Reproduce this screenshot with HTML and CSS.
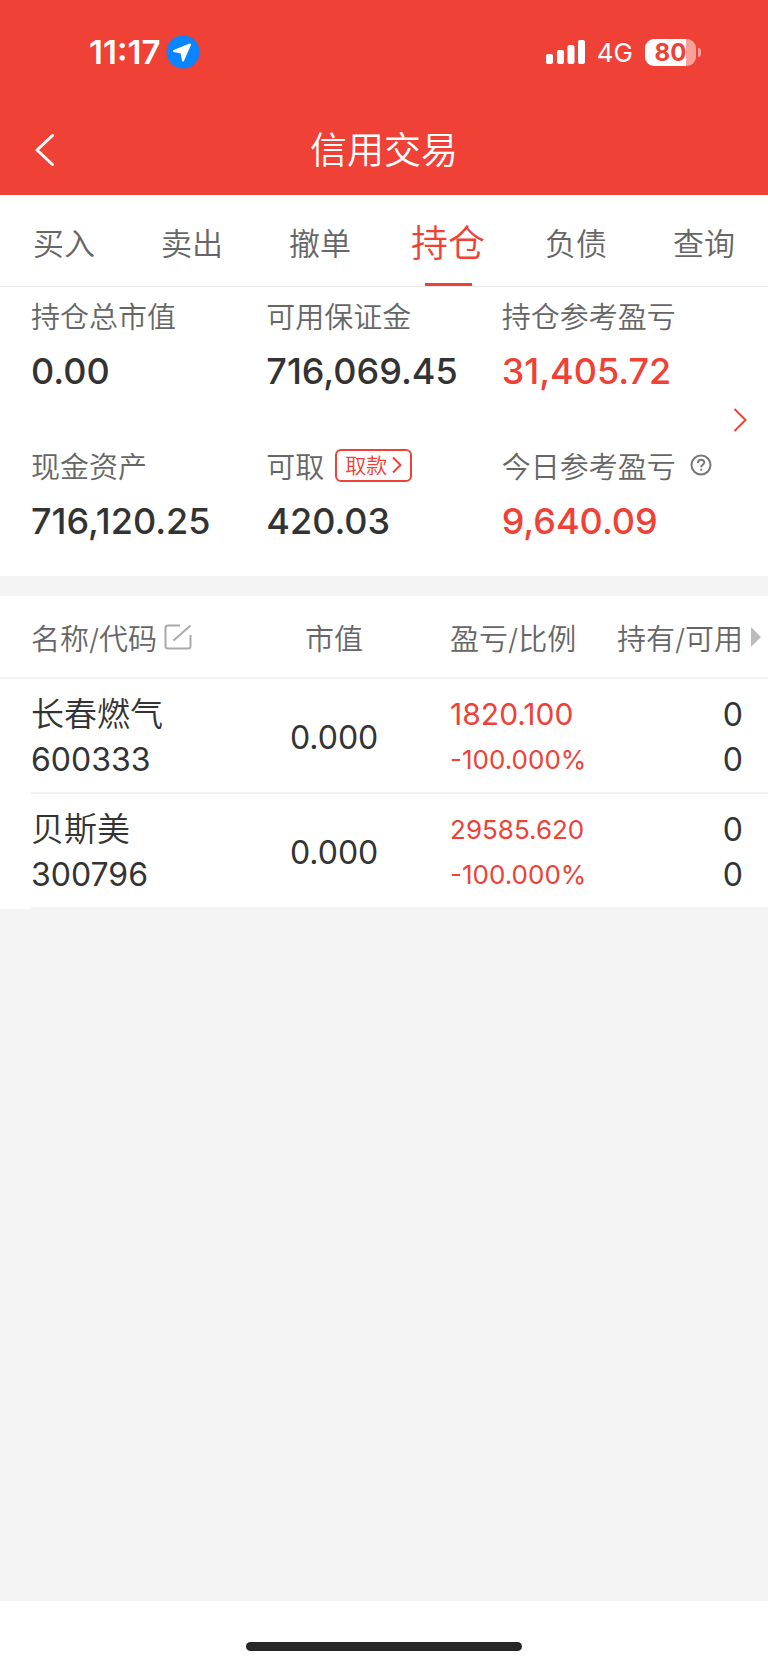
FILE: index.html
```
<!DOCTYPE html>
<html lang="zh-CN">
<head>
    <meta charset="UTF-8">
    <meta name="viewport" content="width=device-width, initial-scale=1.0">
    <title>信用交易</title>
    <link rel="stylesheet" href="styles.css">
</head>
<body>
    <header class="top">
        <div class="status-bar">
            <div class="status-left">
                <span class="time">11:17</span>
                <svg width="34" height="34" viewBox="0 0 34 34">
                    <circle cx="17" cy="17" r="16.500" fill="#0a84ff"/>
                    <path d="M8 16 L24 9.500 L17 25.500 L15.500 17.500 Z" fill="#fff" stroke="#fff" stroke-width="2" stroke-linejoin="round"/>
                </svg>
            </div>
            <div class="status-right">
                <svg width="39" height="26" viewBox="0 0 39 26" fill="#fff">
                    <rect x="0" y="15" width="7" height="10" rx="2"/>
                    <rect x="11" y="11" width="7" height="14" rx="2"/>
                    <rect x="21.500" y="6" width="7" height="19" rx="2"/>
                    <rect x="32" y="1" width="7" height="24" rx="2"/>
                </svg>
                <span class="network">4G</span>
                <div class="battery"><span>80</span></div>
            </div>
        </div>
        <nav class="title-bar">
            <button class="back" type="button" aria-label="返回">
                <svg width="20" height="34" viewBox="0 0 20 34" fill="none" stroke="#fff" stroke-width="3" stroke-linecap="round" stroke-linejoin="round">
                    <path d="M17.500 2.500 L2 17 L17.500 31.500"/>
                </svg>
            </button>
            <h1>信用交易</h1>
        </nav>
    </header>

    <nav class="tabs">
        <a href="#buy">买入</a>
        <a href="#sell">卖出</a>
        <a href="#cancel">撤单</a>
        <a href="#position" class="active">持仓</a>
        <a href="#debt">负债</a>
        <a href="#query">查询</a>
    </nav>

    <section class="summary">
        <div class="item">
            <div class="label">持仓总市值</div>
            <div class="value">0.00</div>
        </div>
        <div class="item">
            <div class="label">可用保证金</div>
            <div class="value">716,069.45</div>
        </div>
        <div class="item">
            <div class="label">持仓参考盈亏</div>
            <div class="value red">31,405.72</div>
        </div>
        <div class="item">
            <div class="label">现金资产</div>
            <div class="value">716,120.25</div>
        </div>
        <div class="item">
            <div class="label">可取
                <button class="withdraw" type="button">取款
                    <svg width="10" height="18" viewBox="0 0 10 18" fill="none" stroke="currentColor" stroke-width="2">
                        <path d="M1 1.500 L8.500 9 L1 16.500"/>
                    </svg>
                </button>
            </div>
            <div class="value">420.03</div>
        </div>
        <div class="item">
            <div class="label">今日参考盈亏
                <button class="help" type="button" aria-label="说明">
                    <svg width="22" height="22" viewBox="0 0 22 22" fill="none" stroke="#777" stroke-width="2">
                        <circle cx="11" cy="11" r="9.500"/>
                        <path d="M8 9 C8 4.500 14.200 4.800 14.200 8.500 C14.200 10.800 11.200 10.700 11.200 13.300"/>
                        <path d="M11.200 14.700 V16.700"/>
                    </svg>
                </button>
            </div>
            <div class="value red">9,640.09</div>
        </div>
        <button class="more" type="button" aria-label="更多">
            <svg width="14" height="24" viewBox="0 0 14 24" fill="none" stroke="currentColor" stroke-width="2">
                <path d="M1.500 1 L12.500 12 L1.500 23"/>
            </svg>
        </button>
    </section>

    <main class="positions">
        <table>
            <thead>
                <tr>
                    <th class="name">
                        <div class="head">名称/代码
                            <button class="edit" type="button" aria-label="编辑">
                                <svg width="28" height="26" viewBox="0 0 28 26" fill="none" stroke="#aaa" stroke-width="2">
                                    <path d="M16 1.500 H4 Q1.500 1.500 1.500 4 V22 Q1.500 24.500 4 24.500 H24 Q26.500 24.500 26.500 22 V11"/>
                                    <path d="M9.500 16.500 L26.500 1.500"/>
                                </svg>
                            </button>
                        </div>
                    </th>
                    <th class="market">市值</th>
                    <th class="profit">盈亏/比例</th>
                    <th class="hold">
                        <div class="head">持有/可用
                            <svg width="10" height="20" viewBox="0 0 10 20" fill="#bbb">
                                <path d="M0 0 L10 10 L0 20 Z"/>
                            </svg>
                        </div>
                    </th>
                </tr>
            </thead>
            <tbody>
                <tr>
                    <td class="name"><div class="stock">长春燃气</div><div>600333</div></td>
                    <td class="market">0.000</td>
                    <td class="profit"><div class="amount">1820.100</div><div>-100.000%</div></td>
                    <td class="hold"><div>0</div><div>0</div></td>
                </tr>
                <tr>
                    <td class="name"><div class="stock">贝斯美</div><div>300796</div></td>
                    <td class="market">0.000</td>
                    <td class="profit"><div>29585.620</div><div>-100.000%</div></td>
                    <td class="hold"><div>0</div><div>0</div></td>
                </tr>
            </tbody>
        </table>
    </main>

    <footer class="home">
        <div class="home-bar"></div>
    </footer>
</body>
</html>
```

FILE: styles.css
```
* {
    box-sizing: border-box;
}

body {
    margin: 0;
    min-height: 100vh;
    display: flex;
    flex-direction: column;
    background-color: #f4f4f4;
    color: #333;
    font-family: Inter, "Noto Sans CJK SC", sans-serif;
    font-weight: 350;
}

button {
    padding: 0;
    border: none;
    background: none;
    font: inherit;
    color: inherit;
    cursor: pointer;
}

svg {
    display: block;
    flex-shrink: 0;
}

/* header */
.top {
    background-color: #ef4136;
    color: #fff;
}

.status-bar {
    height: 104px;
    padding: 0 67px 0 89px;
    display: flex;
    justify-content: space-between;
    align-items: center;
}

.status-left,
.status-right {
    display: flex;
    align-items: center;
}

.status-left {
    gap: 6px;
}

.status-right {
    gap: 12px;
}

.time {
    font-size: 33px;
    font-weight: 600;
}

.network {
    font-size: 26px;
    font-weight: 400;
}

.battery {
    position: relative;
    width: 51px;
    height: 27px;
    margin-right: 5px;
    border-radius: 9px;
    background: linear-gradient(to right, #fff 80%, #f8a09a 80%);
    color: #ef4136;
    font-size: 24px;
    font-weight: 700;
    line-height: 27px;
    text-align: center;
}

.battery::after {
    content: "";
    position: absolute;
    top: 9px;
    right: -5px;
    width: 3px;
    height: 9px;
    border-radius: 0 4px 4px 0;
    background-color: #f8a09a;
}

.title-bar {
    height: 91px;
    padding: 0 35px;
    display: grid;
    grid-template-columns: 1fr auto 1fr;
    align-items: center;
}

.back {
    justify-self: start;
}

h1 {
    margin: 0;
    padding-bottom: 4px;
    font-size: 37px;
    font-weight: 350;
}

/* tabs */
.tabs {
    height: 92px;
    display: grid;
    grid-template-columns: repeat(6, 1fr);
    background-color: #fff;
    border-bottom: 1px solid #ebebeb;
}

.tabs a {
    display: flex;
    position: relative;
    justify-content: center;
    align-items: center;
    padding-top: 2px;
    color: #666;
    font-size: 31px;
    text-decoration: none;
}

.tabs .active {
    padding-top: 0;
    color: #ef4136;
    font-size: 37px;
}

.tabs .active::after {
    content: "";
    position: absolute;
    bottom: 0;
    width: 47px;
    height: 3px;
    background-color: #ef4136;
}

/* account summary */
.summary {
    position: relative;
    display: grid;
    grid-template-columns: repeat(3, 1fr);
    row-gap: 38px;
    padding: 1px 31px 26px;
    background-color: #fff;
}

.label {
    display: flex;
    align-items: center;
    height: 54px;
    color: #666;
    font-size: 29px;
    white-space: nowrap;
}

.value {
    height: 58px;
    font-size: 36px;
    font-weight: 500;
    line-height: 58px;
}

.red {
    color: #ef4136;
}

.withdraw {
    display: flex;
    align-items: center;
    gap: 5px;
    height: 33px;
    margin-left: 11px;
    padding: 0 8px;
    border: 2px solid #ef4136;
    border-radius: 6px;
    color: #ef4136;
    font-size: 21px;
    line-height: 29px;
}

.help {
    margin-left: 14px;
}

.more {
    position: absolute;
    top: 46%;
    right: 21px;
    transform: translateY(-50%);
    color: #ef4136;
}

/* positions table */
.positions {
    flex: 1;
    margin-top: 20px;
}

table {
    width: 100%;
    table-layout: fixed;
    border-collapse: collapse;
    background-color: #fff;
}

th {
    height: 82px;
    padding: 0;
    border-bottom: 2px solid #f2f2f2;
    color: #666;
    font-size: 29px;
    font-weight: 350;
    text-align: left;
    white-space: nowrap;
}

.head {
    display: flex;
    align-items: center;
}

td {
    padding: 13px 0 12px;
    font-size: 32px;
    font-weight: 400;
    line-height: 45px;
}

tbody tr {
    background: linear-gradient(#f2f2f2, #f2f2f2) no-repeat 31px bottom / 100% 2px;
}

.name {
    width: 31%;
    padding-left: 31px;
}

.stock {
    font-size: 33px;
    font-weight: 350;
}

.market {
    width: 25%;
    text-align: center;
}

.profit {
    width: 20%;
    padding-left: 20px;
}

td.profit {
    color: #ef4136;
    font-size: 26px;
}

td.profit .amount {
    font-size: 30px;
}

.hold {
    width: 24%;
    padding-right: 25px;
    text-align: right;
}

.hold .head {
    justify-content: flex-end;
    gap: 8px;
    margin-right: -18px;
}

.edit {
    margin-left: 7px;
}

/* home indicator */
.home {
    height: 64px;
    display: flex;
    justify-content: center;
    align-items: center;
    padding-top: 26px;
    background-color: #fff;
}

.home-bar {
    width: 36%;
    height: 9px;
    border-radius: 5px;
    background-color: #282828;
}
```
